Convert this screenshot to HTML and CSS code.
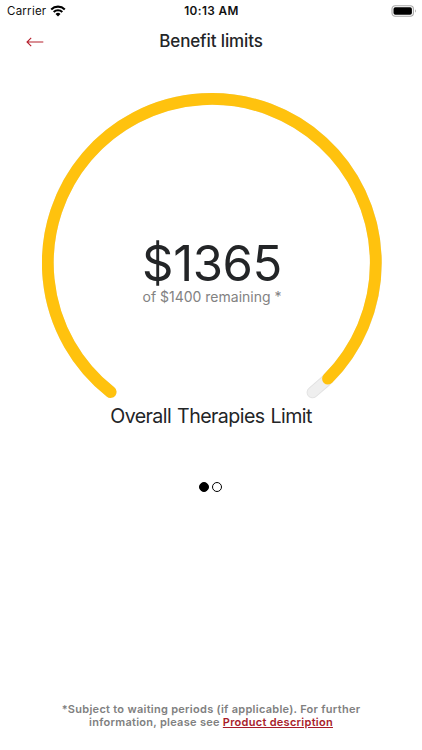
FILE: index.html
```html
<!DOCTYPE html>
<html lang="en">
<head>
<meta charset="utf-8">
<title>Benefit limits</title>
<link rel="stylesheet" href="styles.css">
</head>
<body>
<div class="screen">
  <div class="status">
    <div class="carrier"><span>Carrier</span>
      <svg class="wifi" viewBox="0 0 16 12" width="16" height="12" fill="none" stroke="#000" stroke-width="2.1"><path d="M1.2 4.4a9.7 9.7 0 0 1 13.6 0M3.7 7a6.1 6.1 0 0 1 8.6 0"/><path d="M5.5 8.9a3.6 3.6 0 0 1 5 0L8 11.5z" fill="#000" stroke="none"/></svg>
    </div>
    <time class="clock">10:13 AM</time>
    <svg class="battery" viewBox="0 0 26 12" width="26" height="12"><rect x="1" y=".7" width="21.4" height="10.5" rx="3.2" fill="none" stroke="#a8a8a8" stroke-width="1.1"/><rect x="2.5" y="2.2" width="18.4" height="7.5" rx="1.8"/><path d="M24 4.2q1.5 1.7 0 3.6z" fill="#888"/></svg>
  </div>
  <header class="nav">
    <svg class="back" viewBox="0 0 18 10" width="18" height="10" fill="none" stroke="#b5202d" stroke-width="1.1"><path d="M17.3 5H1M5.2 .8L1 5l4.2 4.2"/></svg>
    <h1 class="title">Benefit limits</h1>
  </header>
  <main class="limit">
    <div class="gauge">
      <svg class="ring" viewBox="0 0 340 306" width="340" height="306" fill="none" stroke-width="11.8" stroke-linecap="round">
        <path d="M68.6 299A164 164 0 1 1 270.5 299.4" stroke="#e2e2e2"/>
        <path d="M68.6 299A164 164 0 1 1 270.5 299.4" stroke="#efefef" stroke-width="10"/>
        <path d="M68.6 299A164 164 0 1 1 286 285.7" stroke="#ffc20e"/>
      </svg>
      <div class="reading">
        <div class="amount">$1365</div>
        <div class="remaining">of $1400 remaining *</div>
      </div>
    </div>
    <h2 class="name">Overall Therapies Limit</h2>
    <div class="dots"><i class="dot active"></i><i class="dot"></i></div>
  </main>
  <footer class="note"><div class="line first">*Subject to waiting periods (if applicable). For further</div><div class="line second">information, please see <a href="#">Product description</a></div></footer>
</div>
</body>
</html>
```
FILE: styles.css
```css
* { box-sizing: border-box; }
body { margin: 0; background: #fff; color: #232527; font-family: Inter, "Liberation Sans", sans-serif; }
.screen { width: 422px; height: 750px; display: flex; flex-direction: column; overflow: hidden; }
.status { height: 22px; padding: 0 5px 0 7px; display: grid; grid-template-columns: 1fr auto 1fr; align-items: center; font-size: 11.5px; line-height: 22px; color: #111; }
.carrier { display: flex; align-items: center; gap: 4px; letter-spacing: .25px; }
.wifi { display: block; }
.clock { font-size: 11.8px; font-weight: 600; letter-spacing: .4px; margin-right: 1px; }
.battery { justify-self: end; }
.nav { height: 40px; display: grid; grid-template-columns: 60px 1fr 60px; align-items: center; }
.back { margin-left: 26px; }
.title { margin: 0; padding-bottom: 3px; font-size: 17px; line-height: 22px; font-weight: 500; text-align: center; white-space: nowrap; letter-spacing: -.12px; }
.limit { display: flex; flex-direction: column; align-items: center; padding-top: 31px; }
.gauge { display: grid; width: 340px; height: 306px; margin-left: 2px; }
.ring, .reading { grid-area: 1 / 1; }
.reading { padding-top: 147px; text-align: center; white-space: nowrap; }
.amount { font-size: 49px; line-height: 48px; letter-spacing: -.4px; }
.remaining { margin-top: -1px; font-size: 14px; line-height: 20px; color: #828282; }
.name { margin: 4px 0 0; font-size: 19.6px; line-height: 26px; font-weight: 400; white-space: nowrap; letter-spacing: -.57px; word-spacing: 1px; }
.dots { margin: 53px 2px 0 0; display: flex; gap: 3px; }
.dot { width: 10px; height: 10px; border: 1.5px solid #000; border-radius: 50%; }
.active { background: #000; }
.note { margin-top: auto; padding-bottom: 21px; color: #808080; font-size: 11px; line-height: 13px; font-weight: 600; text-align: center; white-space: nowrap; letter-spacing: .28px; }
.note a { color: #a81c2a; text-decoration: underline; }
```
